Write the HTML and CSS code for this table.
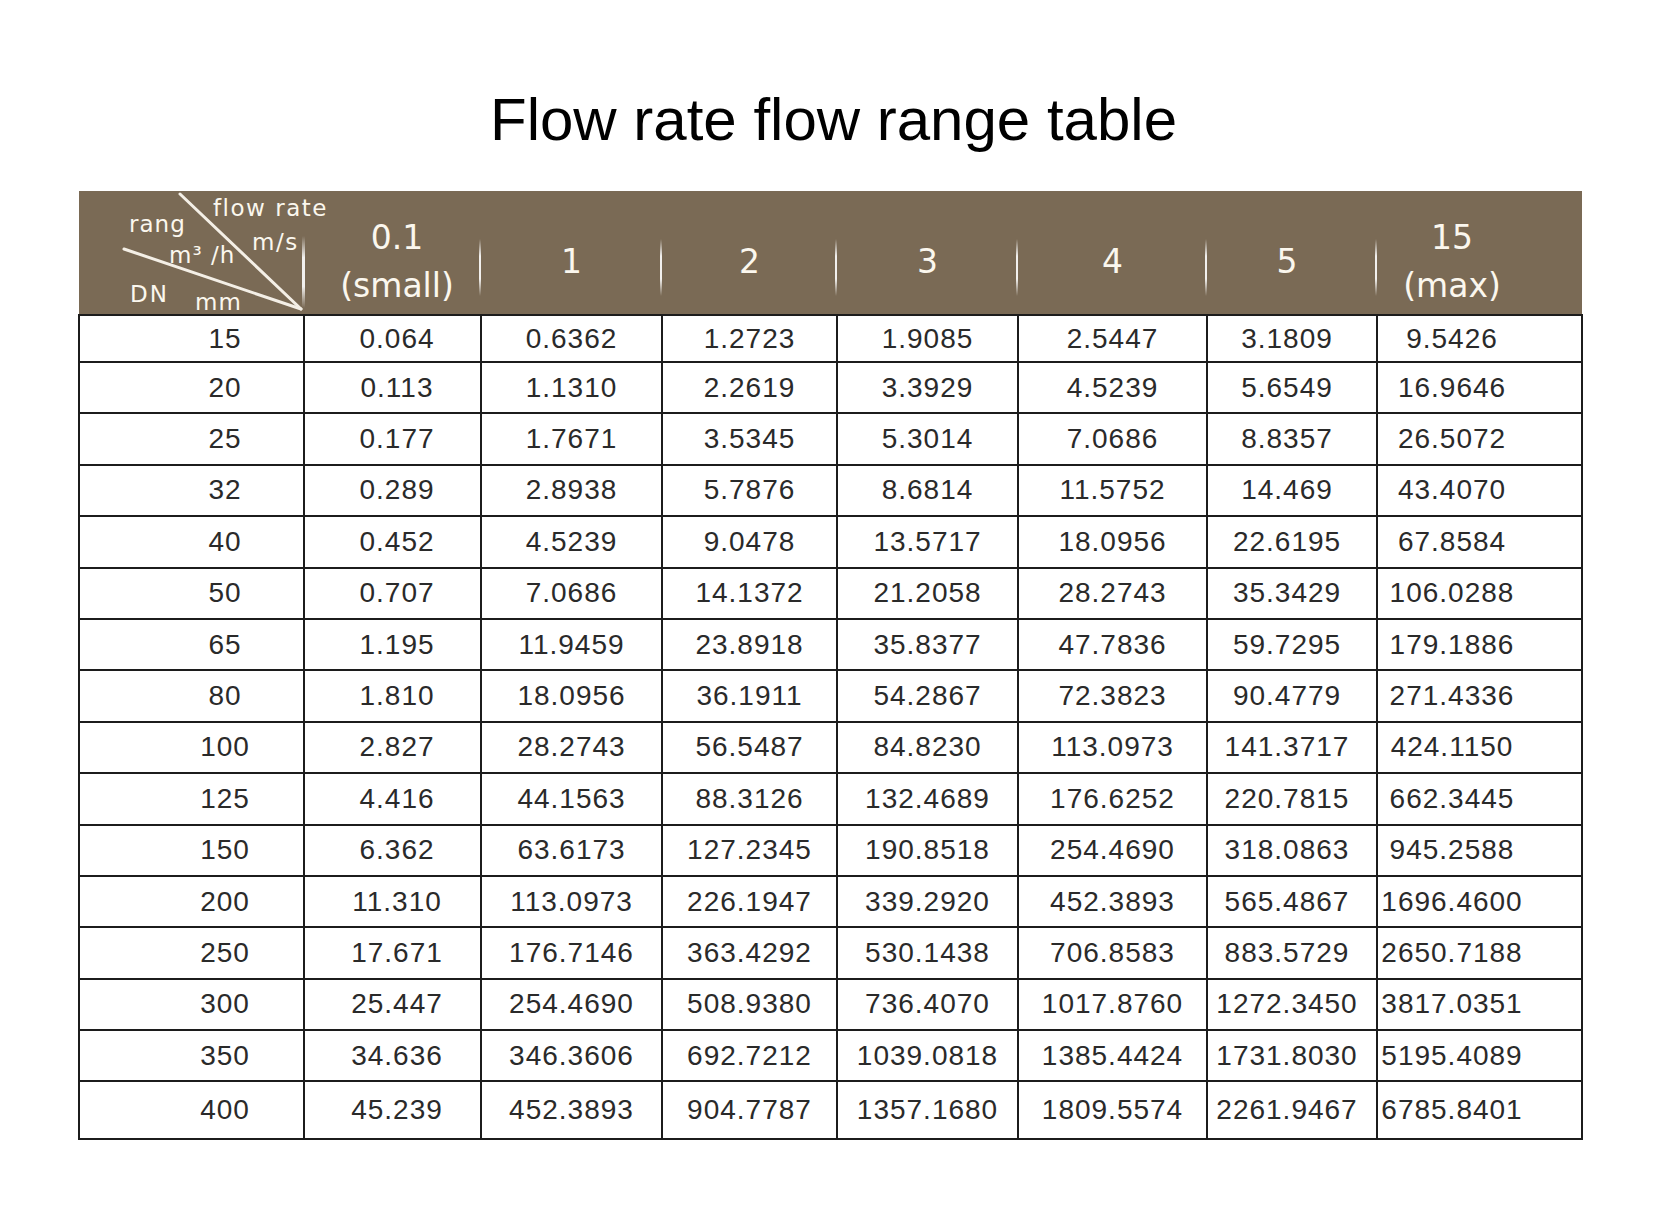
FILE: index.html
```html
<!DOCTYPE html>
<html>
<head>
    <title>Flow rate flow range table</title>
    <meta charset="UTF-8">
    <meta name="viewport" content="width=device-width, initial-scale=1.0">
    <link rel="stylesheet" href="styles.css">
</head>
<body>
    <h1>Flow rate flow range table</h1>

    <table class="flow-table">
        <colgroup>
            <col class="col-dn">
            <col class="col-small">
            <col class="col-1">
            <col class="col-2">
            <col class="col-3">
            <col class="col-4">
            <col class="col-5">
            <col class="col-max">
        </colgroup>
        <thead>
            <tr>
                <th class="corner">
                    <div class="corner-box">
                        <svg class="corner-lines" width="225" height="123" viewBox="0 0 225 123">
                            <line x1="101" y1="3" x2="222" y2="118" />
                            <line x1="45" y1="58" x2="222" y2="118" />
                        </svg>
                        <span class="lbl lbl-flow">flow rate</span>
                        <span class="lbl lbl-rang">rang</span>
                        <span class="lbl lbl-ms">m/s</span>
                        <span class="lbl lbl-m3h">m³ /h</span>
                        <span class="lbl lbl-dn">DN</span>
                        <span class="lbl lbl-mm">mm</span>
                    </div>
                </th>
                <th>0.1<br>(small)</th>
                <th>1</th>
                <th>2</th>
                <th>3</th>
                <th>4</th>
                <th>5</th>
                <th>15<br>(max)</th>
            </tr>
        </thead>
        <tbody>
            <tr><td>15</td><td>0.064</td><td>0.6362</td><td>1.2723</td><td>1.9085</td><td>2.5447</td><td>3.1809</td><td>9.5426</td></tr>
            <tr><td>20</td><td>0.113</td><td>1.1310</td><td>2.2619</td><td>3.3929</td><td>4.5239</td><td>5.6549</td><td>16.9646</td></tr>
            <tr><td>25</td><td>0.177</td><td>1.7671</td><td>3.5345</td><td>5.3014</td><td>7.0686</td><td>8.8357</td><td>26.5072</td></tr>
            <tr><td>32</td><td>0.289</td><td>2.8938</td><td>5.7876</td><td>8.6814</td><td>11.5752</td><td>14.469</td><td>43.4070</td></tr>
            <tr><td>40</td><td>0.452</td><td>4.5239</td><td>9.0478</td><td>13.5717</td><td>18.0956</td><td>22.6195</td><td>67.8584</td></tr>
            <tr><td>50</td><td>0.707</td><td>7.0686</td><td>14.1372</td><td>21.2058</td><td>28.2743</td><td>35.3429</td><td>106.0288</td></tr>
            <tr><td>65</td><td>1.195</td><td>11.9459</td><td>23.8918</td><td>35.8377</td><td>47.7836</td><td>59.7295</td><td>179.1886</td></tr>
            <tr><td>80</td><td>1.810</td><td>18.0956</td><td>36.1911</td><td>54.2867</td><td>72.3823</td><td>90.4779</td><td>271.4336</td></tr>
            <tr><td>100</td><td>2.827</td><td>28.2743</td><td>56.5487</td><td>84.8230</td><td>113.0973</td><td>141.3717</td><td>424.1150</td></tr>
            <tr><td>125</td><td>4.416</td><td>44.1563</td><td>88.3126</td><td>132.4689</td><td>176.6252</td><td>220.7815</td><td>662.3445</td></tr>
            <tr><td>150</td><td>6.362</td><td>63.6173</td><td>127.2345</td><td>190.8518</td><td>254.4690</td><td>318.0863</td><td>945.2588</td></tr>
            <tr><td>200</td><td>11.310</td><td>113.0973</td><td>226.1947</td><td>339.2920</td><td>452.3893</td><td>565.4867</td><td>1696.4600</td></tr>
            <tr><td>250</td><td>17.671</td><td>176.7146</td><td>363.4292</td><td>530.1438</td><td>706.8583</td><td>883.5729</td><td>2650.7188</td></tr>
            <tr><td>300</td><td>25.447</td><td>254.4690</td><td>508.9380</td><td>736.4070</td><td>1017.8760</td><td>1272.3450</td><td>3817.0351</td></tr>
            <tr><td>350</td><td>34.636</td><td>346.3606</td><td>692.7212</td><td>1039.0818</td><td>1385.4424</td><td>1731.8030</td><td>5195.4089</td></tr>
            <tr><td>400</td><td>45.239</td><td>452.3893</td><td>904.7787</td><td>1357.1680</td><td>1809.5574</td><td>2261.9467</td><td>6785.8401</td></tr>
        </tbody>
    </table>
</body>
</html>
```

FILE: styles.css
```css
body {
    margin: 0;
    background-color: #fff;
    color: #222;
    font-family: 'Liberation Sans', Arial, sans-serif;
}
h1 {
    margin: 0;
    padding-top: 85px;
    font-size: 60px;
    line-height: 70px;
    font-weight: normal;
    text-align: center;
    color: #000;
}
.flow-table {
    margin: 36px 0 0 78px;
    width: 1503px;
    border-collapse: collapse;
    table-layout: fixed;
}
.col-dn { width: 225px; }
.col-small { width: 177px; }
.col-1 { width: 181px; }
.col-2 { width: 175px; }
.col-3 { width: 181px; }
.col-4 { width: 189px; }
.col-5 { width: 170px; }
.col-max { width: 205px; }

/* header */
.flow-table th {
    position: relative;
    height: 105px;
    padding: 18px 0 0 0;
    border: none;
    background-color: #7a6a55;
    color: #fbf7ee;
    font-family: 'DejaVu Sans', sans-serif;
    font-size: 33px;
    font-weight: normal;
    line-height: 48px;
    vertical-align: middle;
}
.flow-table th::after {
    content: "";
    position: absolute;
    top: 48px;
    bottom: 18px;
    right: -1px;
    width: 3px;
    background: linear-gradient(to bottom, rgba(255,255,255,0), rgba(255,255,255,0.9) 30%, rgba(255,255,255,0.9) 70%, rgba(255,255,255,0));
}
.flow-table th:last-child::after {
    display: none;
}
.flow-table th:last-child {
    padding-right: 55px;
}
.flow-table th:nth-child(7) {
    padding-right: 10px;
}
.flow-table th:nth-child(2) {
    padding-left: 9px;
}
.flow-table th.corner {
    z-index: 2;
    height: 123px;
    padding: 0;
    vertical-align: top;
}
.flow-table th.corner::after {
    top: 45px;
    bottom: 6px;
}
.corner-box {
    position: relative;
    height: 123px;
}
.corner-lines {
    position: absolute;
    top: 0;
    left: 0;
    overflow: visible;
}
.corner-lines line {
    stroke: #f4efe6;
    stroke-width: 3;
    stroke-linecap: round;
}
.lbl {
    position: absolute;
    font-size: 23px;
    line-height: 22px;
    letter-spacing: 1px;
    white-space: nowrap;
}
.lbl-flow { left: 134px; top: 6px; letter-spacing: 1.5px; }
.lbl-rang { left: 50px; top: 22px; }
.lbl-ms { left: 173px; top: 40px; letter-spacing: 1.5px; }
.lbl-m3h { left: 90px; top: 53px; }
.lbl-dn { left: 51px; top: 92px; letter-spacing: 2px; }
.lbl-mm { left: 116px; top: 100px; }

/* body */
.flow-table td {
    height: 49.4px;
    padding: 0;
    border: 2px solid #1c1c1c;
    font-size: 28px;
    letter-spacing: 1px;
    text-align: center;
    vertical-align: middle;
    color: #2a2a2a;
}
.flow-table tbody tr:first-child td {
    height: 45px;
}
.flow-table tbody tr:last-child td {
    height: 56px;
}
.flow-table td:first-child {
    padding-left: 67px;
}
.flow-table td:nth-child(2) {
    padding-left: 9px;
}
.flow-table td:nth-child(7) {
    padding-right: 10px;
}
.flow-table td:last-child {
    padding-right: 55px;
}
```
